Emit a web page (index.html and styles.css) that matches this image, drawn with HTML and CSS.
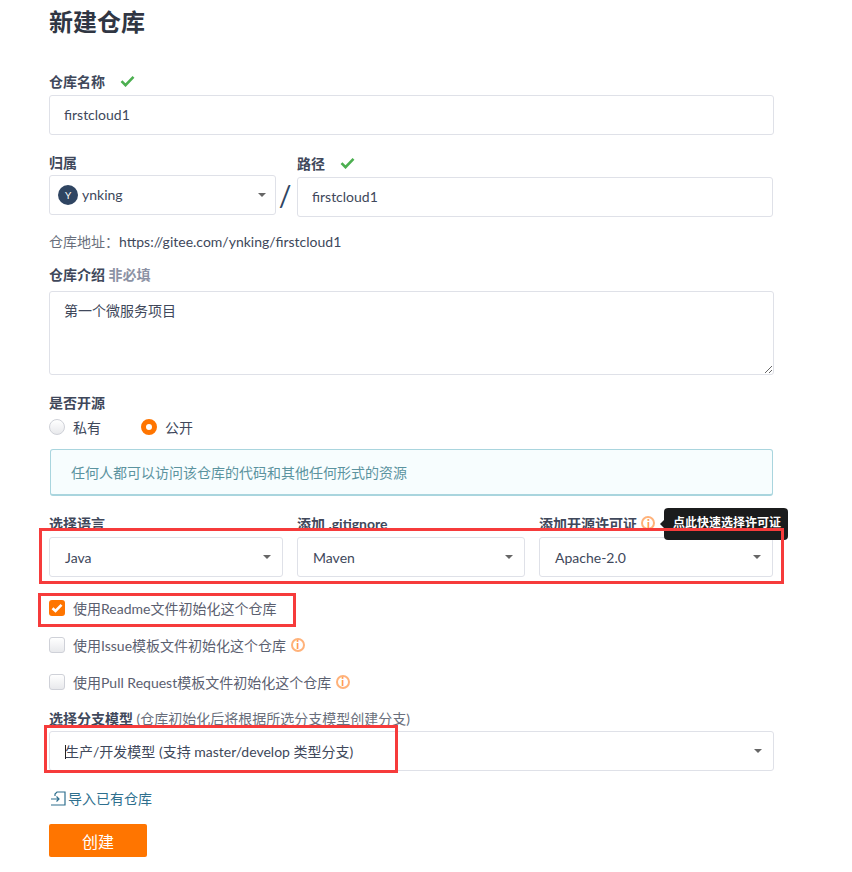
FILE: index.html
```html
<!DOCTYPE html>
<html lang="zh-CN">
<head>
  <meta charset="UTF-8">
  <title>新建仓库</title>
  <link rel="stylesheet" href="styles.css">
</head>
<body>
  <div class="page">
    <h1>新建仓库</h1>

    <form class="new-repo">
      <!-- name -->
      <div class="field name-field">
        <label class="label">仓库名称 <svg class="ok" viewBox="0 0 15 12"><path d="M1.5 6.2l4 4 8-8.4" /></svg></label>
        <input class="input" type="text" value="firstcloud1">
      </div>

      <!-- owner / path -->
      <div class="owner-row">
        <div class="owner">
          <label class="label">归属</label>
          <div class="select owner-select">
            <span class="avatar">Y</span>
            <span class="owner-name">ynking</span>
            <i class="caret"></i>
          </div>
        </div>
        <span class="slash">/</span>
        <div class="path">
          <label class="label">路径 <svg class="ok" viewBox="0 0 15 12"><path d="M1.5 6.2l4 4 8-8.4" /></svg></label>
          <input class="input" type="text" value="firstcloud1">
        </div>
      </div>

      <div class="repo-url">仓库地址：<span>https://gitee.com/ynking/firstcloud1</span></div>

      <!-- description -->
      <div class="field desc-field">
        <label class="label">仓库介绍 <span class="optional">非必填</span></label>
        <textarea class="textarea">第一个微服务项目</textarea>
      </div>

      <!-- visibility -->
      <div class="field open-field">
        <label class="label">是否开源</label>
        <div class="radios">
          <span class="radio-item"><i class="radio"></i>私有</span>
          <span class="radio-item"><i class="radio on"></i>公开</span>
        </div>
      </div>
      <div class="notice">任何人都可以访问该仓库的代码和其他任何形式的资源</div>

      <!-- templates -->
      <div class="lang-row">
        <div>
          <label class="label">选择语言</label>
          <div class="select"><span>Java</span><i class="caret"></i></div>
        </div>
        <div>
          <label class="label">添加 .gitignore</label>
          <div class="select"><span>Maven</span><i class="caret"></i></div>
        </div>
        <div>
          <label class="label">添加开源许可证 <span class="tip-icon">i</span></label>
          <div class="select"><span>Apache-2.0</span><i class="caret"></i></div>
        </div>
      </div>

      <div class="checks">
        <div class="check-item"><i class="checkbox on"><svg viewBox="0 0 12 10"><path d="M1.5 5.2l3 2.8 6-6.2" /></svg></i>使用Readme文件初始化这个仓库</div>
        <div class="check-item"><i class="checkbox"></i>使用Issue模板文件初始化这个仓库 <span class="tip-icon">i</span></div>
        <div class="check-item"><i class="checkbox"></i>使用Pull Request模板文件初始化这个仓库 <span class="tip-icon">i</span></div>
      </div>

      <div class="field branch-field">
        <label class="label">选择分支模型 <span class="hint">(仓库初始化后将根据所选分支模型创建分支)</span></label>
        <div class="select"><span class="text-cursor"></span><span>生产/开发模型 (支持 master/develop 类型分支)</span><i class="caret"></i></div>
      </div>

      <a class="import-link" href="#">
        <svg viewBox="0 0 16 15"><path d="M5 5V3l2-2h8v13H1M1 8h8M6.5 5.5L9 8l-2.5 2.5" /></svg>导入已有仓库
      </a>

      <button class="submit" type="button">创建</button>
    </form>

    <!-- overlays -->
    <div class="tooltip">点此快速选择许可证</div>
    <div class="mark mark-lang"></div>
    <div class="mark mark-readme"></div>
    <div class="mark mark-branch"></div>
  </div>
</body>
</html>
```

FILE: styles.css
```css
* {
  box-sizing: border-box;
}
html, body {
  margin: 0;
  background: #fff;
}
body {
  font-family: Lato, "Noto Sans CJK SC", sans-serif;
  font-size: 14px;
  color: #40485b;
}
.page {
  position: relative;
  width: 852px;
  height: 872px;
  padding: 6px 78px 0 49px;
  overflow: hidden;
}
h1 {
  margin: 0;
  font-size: 24px;
  line-height: 32px;
  font-weight: 700;
  color: #303643;
}
.new-repo {
  margin-top: 33px;
}
.label {
  display: flex;
  align-items: center;
  height: 20px;
  font-size: 14px;
  font-weight: 700;
  color: #40485b;
  white-space: pre;
}
.ok {
  width: 15px;
  height: 12px;
  margin-left: 12px;
  fill: none;
  stroke: #4caf50;
  stroke-width: 2.6;
}
.input, .select, .textarea {
  display: block;
  width: 100%;
  background: #fff;
  border: 1px solid #dfe1e8;
  border-radius: 3px;
  font-family: inherit;
  font-size: 14px;
  color: #40485b;
}
.input {
  height: 40px;
  padding: 0 14px 2px;
  outline: none;
}
.select {
  display: flex;
  align-items: center;
  height: 40px;
  padding: 0 15px;
  position: relative;
}
.caret {
  margin-left: auto;
  margin-right: -4px;
  border-top: 4px solid #666;
  border-left: 4px solid transparent;
  border-right: 4px solid transparent;
}
.name-field .label {
  height: 24px;
  padding-bottom: 5px;
}
.owner-row {
  display: flex;
  margin-top: 14px;
}
.owner {
  width: 227px;
}
.owner .label {
  height: 26px;
}
.owner-select {
  padding: 0 9px 0 8px;
}
.owner-select .caret {
  margin-right: 0;
}
.avatar {
  display: flex;
  align-items: center;
  justify-content: center;
  width: 20px;
  height: 20px;
  border-radius: 50%;
  background: #2f4562;
  color: #fff;
  font-size: 10px;
}
.owner-name {
  margin-left: 4px;
  margin-top: -2px;
  font-size: 14px;
}
.slash {
  width: 21px;
  margin-top: 26px;
  padding-right: 3px;
  text-align: center;
  font-size: 28px;
  line-height: 40px;
  color: #2f4562;
  font-weight: 400;
}
.path {
  flex: 1;
  margin-right: 1px;
}
.path .label {
  height: 28px;
}
.repo-url {
  margin-top: 16px;
  line-height: 18px;
  color: #6a6f7c;
}
.repo-url span {
  color: #40485b;
}
.desc-field {
  margin-top: 13px;
}
.desc-field .label {
  margin-bottom: 7px;
}
.optional {
  color: #8c92a4;
}
.textarea {
  height: 84px;
  padding: 9px 14px;
  font-size: 14px;
  line-height: 20px;
}
.open-field {
  margin-top: 17px;
}
.radios {
  display: flex;
  margin-top: 5px;
  height: 20px;
  align-items: center;
}
.radio-item {
  display: flex;
  align-items: center;
  margin-right: 40px;
  color: #40485b;
}
.radio {
  width: 16px;
  height: 16px;
  margin-right: 8px;
  border-radius: 50%;
  border: 1px solid #cfd1d8;
  background: linear-gradient(#fff, #e8e9ec);
}
.radio.on {
  border: 5px solid #ff7500;
  background: #fff;
}
.notice {
  display: flex;
  align-items: center;
  height: 47px;
  margin: 12px 1px 0;
  padding: 0 20px;
  background: #f7fdfe;
  border: 1px solid #a9d5de;
  border-bottom-width: 2px;
  border-radius: 3px;
  color: #5b939f;
  font-size: 14px;
}
.lang-row {
  display: grid;
  grid-template-columns: 234px 228px 234px;
  column-gap: 14px;
  margin-top: 13px;
  margin-right: 1px;
}
.lang-row .label {
  height: 28px;
}
.tip-icon {
  display: inline-flex;
  align-items: center;
  justify-content: center;
  width: 14px;
  height: 14px;
  margin-left: 1px;
  border: 2px solid #ffb27a;
  border-radius: 50%;
  color: #ff9a4d;
  font-size: 11px;
  font-weight: 900;
  line-height: 1;
}
.checks {
  margin-top: 12px;
}
.check-item {
  display: flex;
  align-items: center;
  height: 37px;
  color: #5b6070;
  white-space: pre;
}
.checkbox {
  display: flex;
  align-items: center;
  justify-content: center;
  width: 16px;
  height: 16px;
  margin-right: 8px;
  border: 1px solid #cfd1d8;
  border-radius: 3px;
  background: linear-gradient(#fff, #e8e9ec);
}
.checkbox.on {
  border: 0;
  background: #ff7500;
}
.checkbox svg {
  width: 12px;
  height: 10px;
  fill: none;
  stroke: #fff;
  stroke-width: 2.6;
}
.branch-field {
  margin-top: 5px;
}
.branch-field .label {
  height: 26px;
}
.hint {
  font-weight: 400;
  color: #6a6f7c;
}
.text-cursor {
  position: absolute;
  left: 15px;
  top: 13px;
  height: 14px;
  border-left: 1px solid #222;
}
.import-link {
  display: flex;
  align-items: center;
  height: 20px;
  margin-top: 17px;
  color: #2e6f8e;
  text-decoration: none;
  font-size: 14px;
}
.import-link svg {
  width: 16px;
  height: 15px;
  margin-left: 1px;
  margin-right: 2px;
  fill: none;
  stroke: #2e6f8e;
  stroke-width: 1.2;
}
.submit {
  display: block;
  width: 98px;
  height: 33px;
  margin-top: 16px;
  padding: 0;
  border: 0;
  border-radius: 2px;
  background: #ff7500;
  color: #fff;
  font-family: inherit;
  font-size: 16px;
}
.tooltip {
  position: absolute;
  left: 664px;
  top: 508px;
  width: 124px;
  height: 32px;
  padding: 6px 0 0 9px;
  background: #1b1c1d;
  border-radius: 4px;
  color: #fff;
  font-size: 12px;
  font-weight: 700;
  line-height: 18px;
  white-space: nowrap;
}
.tooltip::before {
  content: "";
  position: absolute;
  left: -4px;
  top: 12px;
  border-top: 4px solid transparent;
  border-bottom: 4px solid transparent;
  border-right: 4px solid #1b1c1d;
}
.mark {
  position: absolute;
  border: 3px solid #f63b3b;
}
.mark-lang {
  left: 39px;
  top: 528px;
  width: 745px;
  height: 56px;
}
.mark-readme {
  left: 38px;
  top: 593px;
  width: 258px;
  height: 34px;
}
.mark-branch {
  left: 44px;
  top: 725px;
  width: 354px;
  height: 48px;
}
```
